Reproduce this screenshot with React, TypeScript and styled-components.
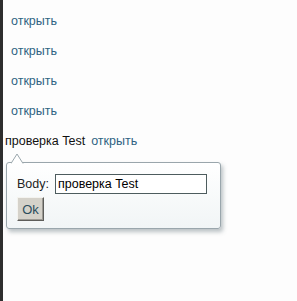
import styled, { createGlobalStyle } from 'styled-components'

const GlobalStyle = createGlobalStyle`
  html, body {
    margin: 0;
    padding: 0;
    background: #fdfdfd;
  }
  body {
    font-family: 'Liberation Sans', Arial, sans-serif;
  }
`

const Page = styled.div`
  position: relative;
  min-height: 301px;
  box-sizing: border-box;
  border-left: 3px solid #2e2e2e;
  padding-top: 6px;
`

const Row = styled.div<{ indent: number }>`
  height: 30px;
  display: flex;
  align-items: center;
  padding-left: ${(p) => p.indent}px;
  font-size: 12.5px;
`

const Link = styled.a`
  color: #2f6382;
  text-decoration: none;
  cursor: pointer;
`

const Subject = styled.span`
  color: #111;
  margin-right: 6px;
`

const Popup = styled.div`
  position: absolute;
  left: 3px;
  top: 162px;
  width: 215px;
  height: 67px;
  box-sizing: border-box;
  padding: 11px 0 0 10px;
  border: 1px solid #9aa6ac;
  border-radius: 3px;
  background: linear-gradient(#ffffff, #f1f5f6);
  box-shadow: 2px 3px 4px rgba(60, 80, 90, 0.35);
`

const Arrow = styled.svg`
  position: absolute;
  left: 4px;
  top: -10px;
`

const Field = styled.div`
  display: flex;
  align-items: center;
  gap: 6px;
  font-size: 12.5px;
  color: #222;
`

const Input = styled.input`
  width: 152px;
  height: 20px;
  box-sizing: border-box;
  border: 1px solid #4d5c5e;
  padding: 0 2px;
  font: inherit;
  font-size: 12.5px;
  color: #000;
  background: #fff;
  outline: none;
`

const OkButton = styled.button`
  margin-top: 3px;
  width: 27px;
  height: 24px;
  padding: 0;
  font-family: 'Liberation Sans', Arial, sans-serif;
  font-size: 13px;
  color: #2c4d5c;
  background: #d5d2ca;
  border: 1px solid;
  border-color: #f4f3ef #5d5d5a #5d5d5a #f4f3ef;
  box-shadow: inset -1px -1px 0 #9c9a94;
`

export default function App() {
  const links = [0, 1, 2, 3]
  return (
    <>
      <GlobalStyle />
      <Page>
        {links.map((i) => (
          <Row key={i} indent={8}>
            <Link>открыть</Link>
          </Row>
        ))}
        <Row indent={2}>
          <Subject>проверка Test</Subject>
          <Link>открыть</Link>
        </Row>
        <Popup>
          <Arrow width="14" height="11" viewBox="0 0 14 11">
            <path d="M0 10.5 L6 1 L12 10.5" fill="#fff" stroke="#9aa6ac" strokeWidth="1" />
            <rect x="1" y="10" width="10" height="2" fill="#fff" />
          </Arrow>
          <Field>
            <span>Body:</span>
            <Input defaultValue="проверка Test" />
          </Field>
          <OkButton>Ok</OkButton>
        </Popup>
      </Page>
    </>
  )
}
